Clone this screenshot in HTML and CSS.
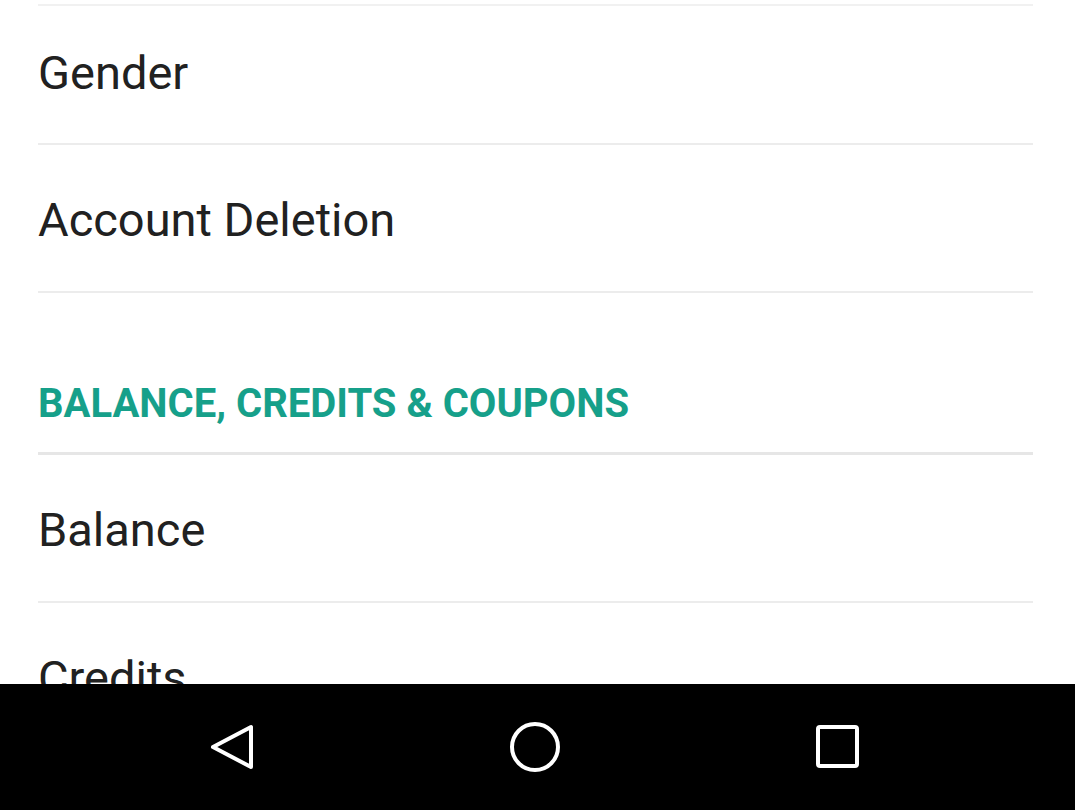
FILE: index.html
```html
<!DOCTYPE html>
<html lang="en">
<head>
<meta charset="utf-8">
<title>Settings</title>
<link rel="stylesheet" href="styles.css">
</head>
<body>
<div class="screen">
  <main class="content">
    <div class="list">
      <div class="top-rule"></div>
      <div class="row row-first"><span class="label">Gender</span></div>
      <div class="row"><span class="label">Account Deletion</span></div>
      <div class="section-header"><span class="section-title">BALANCE, CREDITS &amp; COUPONS</span></div>
      <div class="row"><span class="label">Balance</span></div>
      <div class="row"><span class="label">Credits</span></div>
    </div>
  </main>
  <nav class="navbar">
    <button class="nav-btn" aria-label="Back">
      <svg width="60" height="60" viewBox="0 0 60 60"><path d="M11 30 L49 10 L49 50 Z" fill="none" stroke="#fff" stroke-width="4" stroke-linejoin="round"/></svg>
    </button>
    <button class="nav-btn" aria-label="Home">
      <svg width="60" height="60" viewBox="0 0 60 60"><circle cx="30" cy="30" r="23" fill="none" stroke="#fff" stroke-width="4"/></svg>
    </button>
    <button class="nav-btn" aria-label="Recents">
      <svg width="60" height="60" viewBox="0 0 60 60"><rect x="10" y="10" width="39" height="39" rx="2" fill="none" stroke="#fff" stroke-width="4"/></svg>
    </button>
  </nav>
</div>
</body>
</html>
```
FILE: styles.css
```css
html, body {
  margin: 0;
  padding: 0;
  background: #fff;
}
.screen {
  width: 1075px;
  height: 810px;
  display: flex;
  flex-direction: column;
  overflow: hidden;
  font-family: Roboto, "Liberation Sans", sans-serif;
}
.content {
  flex: 1;
  min-height: 0;
  overflow: hidden;
  background: #fff;
}
.list {
  margin: 0 42px 0 38px;
}
.top-rule {
  height: 4px;
  border-bottom: 2px solid #f1f1f1;
}
.row {
  height: 146px;
  border-bottom: 2px solid #ececec;
  display: flex;
  align-items: center;
}
.row-first {
  height: 137px;
}
.label {
  font-size: 47px;
  color: #212121;
  line-height: 1;
  margin-top: 2px;
}
.row-first .label {
  margin-top: -5px;
}
.section-header {
  height: 162px;
  border-bottom: 3px solid #e6e6e6;
  display: flex;
  align-items: flex-end;
  box-sizing: border-box;
}
.section-title {
  font-size: 40px;
  font-weight: 700;
  color: #16a08a;
  line-height: 1;
  margin-bottom: 28px;
}
.navbar {
  height: 126px;
  flex: none;
  background: #000;
  display: flex;
  justify-content: center;
  align-items: center;
  gap: 243px;
  padding-right: 6px;
}
.nav-btn {
  width: 60px;
  height: 60px;
  padding: 0;
  border: 0;
  background: transparent;
  display: flex;
  align-items: center;
  justify-content: center;
}
```
